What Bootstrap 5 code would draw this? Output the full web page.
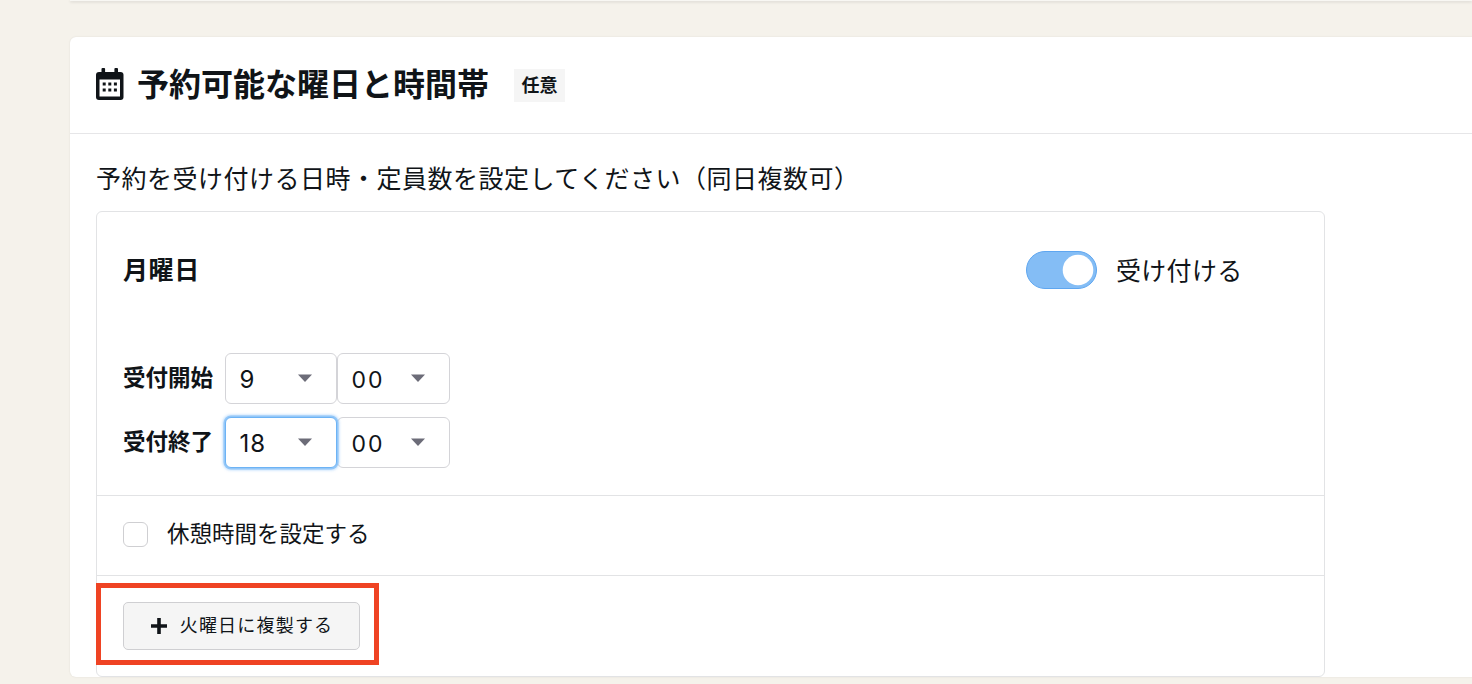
<!DOCTYPE html>
<html lang="ja">
<head>
<meta charset="utf-8">
<title>予約可能な曜日と時間帯</title>
<link href="https://cdn.jsdelivr.net/npm/bootstrap@5.3.0/dist/css/bootstrap.min.css" rel="stylesheet">
<style>
html,body{height:684px;overflow:hidden}
body{background:#f5f2eb;color:#101418;font-family:Inter,"Noto Sans CJK JP",sans-serif;padding:0 0 0 70px}
.topstrip{height:1px;background:#f8f7f3;box-shadow:0 1px 3px rgba(0,0,0,.2);margin-bottom:36px}
.panel{width:1420px;border:0;border-radius:6px 0 0 6px;background:#fff;box-shadow:0 0 2px rgba(0,0,0,.1)}
.panel-head{height:97px;padding:0 0 0 26px;border-bottom:1px solid #e6e6e8;gap:13px}
.head-icon{margin:0 0 3px 0;flex:none}
.panel-title{font-size:32px;font-weight:700;line-height:1;margin:0}
.opt-tag{background:#f5f5f5;font-size:18px;font-weight:700;padding:0 7.5px;height:33px;line-height:33px;margin-left:12px;color:#101418}
.panel-main{padding:29px 0 0 26px}
.lead-text{font-size:25px;letter-spacing:.5px;line-height:32px;margin:0 0 16px}
.day-box{width:1229px;height:466px;border:1px solid #e2e3e5;border-radius:6px;position:relative}
.day-top{padding:0 81.5px 0 26px;height:118px}
.day-name{font-size:25px;font-weight:700;letter-spacing:.6px}
.sw-wrap{gap:19px}
.sw-track{width:71px;height:38px;margin:0 0 3px;padding:0;min-height:0}
.sw-track .form-check-input,.sw-track .form-check-input:checked{width:71px;height:38px;margin:0;float:none;display:block;background-color:#84bdf5;border:1px solid #5ea6f0;opacity:1;box-shadow:none;--bs-form-switch-bg:url("data:image/svg+xml,<svg xmlns='http://www.w3.org/2000/svg' viewBox='-4 -4 8 8'><circle r='3.4' fill='%23fff'/></svg>");background-position:right center}
.sw-text{font-size:25px;line-height:1;letter-spacing:.3px}
.time-area{padding:23px 0 26px 26px;height:165px}
.time-row{height:51px;margin-bottom:13px}
.time-row:last-child{margin-bottom:0}
.time-label{width:102px;font-size:22.5px;font-weight:700;line-height:1;white-space:nowrap}
.time-pick{width:112px;height:51px;font-size:24px;color:#101418;padding:3px 0 0 13.5px;border:1px solid #d4d4d8;border-radius:6px;box-shadow:none;letter-spacing:1px;
background-image:url("data:image/svg+xml,<svg xmlns='http://www.w3.org/2000/svg' width='16' height='9'><path d='M1 .5h14L8 8z' fill='%236c6c78'/></svg>");background-size:16px 9px;background-position:right 23px center}
.time-pick.wide-num{width:113px;font-size:23px;letter-spacing:2px}
.time-pick.on{border-color:#6db3f5;box-shadow:0 0 0 1.5px #93c7f8,0 0 3px 2px rgba(120,185,250,.6);position:relative;z-index:1}
.sect-row{border-top:1px solid #e2e3e5}
.brk-row{height:80px;padding:0 0 2px 26px;gap:19px}
.brk-row .form-check-input{width:25px;height:25px;margin:0;border:1px solid #cfcfd2;border-radius:6px;flex:none}
.brk-text{font-size:22.5px;line-height:1}
.dup-row{height:101px;padding:26px 0 0 26px}
.dup-btn{width:237px;height:48px;background:#f5f5f5;border:1px solid #cfcfd2;border-radius:5px;font-size:18px;letter-spacing:1.2px;color:#101418;padding:0;gap:12px;line-height:1}
.dup-btn:hover{background:#f5f5f5;color:#101418}
.note-frame{position:absolute;left:-1px;top:371px;width:282.5px;height:82px;border:5px solid #ef4323;pointer-events:none}
</style>
</head>
<body>
<div class="topstrip"></div>
<div class="card panel">
  <div class="panel-head d-flex align-items-center">
    <svg class="head-icon" width="28" height="32" viewBox="0 0 28 32" aria-hidden="true"><rect x="0" y="4" width="27.5" height="28" rx="3" fill="#101418"/><rect x="5.5" y="0" width="3.6" height="7" rx="1" fill="#101418"/><rect x="18.4" y="0" width="3.6" height="7" rx="1" fill="#101418"/><rect x="3.5" y="11.5" width="20.5" height="17" fill="#fff"/><g fill="#101418"><rect x="6.7" y="14.5" width="3" height="3"/><rect x="12.3" y="14.5" width="3" height="3"/><rect x="17.9" y="14.5" width="3" height="3"/><rect x="6.7" y="20.5" width="3" height="3"/><rect x="12.3" y="20.5" width="3" height="3"/><rect x="17.9" y="20.5" width="3" height="3"/></g></svg>
    <h2 class="panel-title">予約可能な曜日と時間帯</h2>
    <span class="opt-tag">任意</span>
  </div>
  <div class="panel-main">
    <p class="lead-text">予約を受け付ける日時・定員数を設定してください（同日複数可）</p>
    <div class="day-box">
      <div class="day-top d-flex align-items-center justify-content-between">
        <span class="day-name">月曜日</span>
        <div class="d-flex align-items-center sw-wrap">
          <div class="form-check form-switch sw-track"><input class="form-check-input" type="checkbox" role="switch" checked aria-label="受け付ける"></div>
          <span class="sw-text">受け付ける</span>
        </div>
      </div>
      <div class="time-area">
        <div class="time-row d-flex align-items-center">
          <span class="time-label">受付開始</span>
          <select class="form-select time-pick" aria-label="開始時"><option>9</option></select>
          <select class="form-select time-pick wide-num" aria-label="開始分"><option>00</option></select>
        </div>
        <div class="time-row d-flex align-items-center">
          <span class="time-label">受付終了</span>
          <select class="form-select time-pick on" aria-label="終了時"><option>18</option></select>
          <select class="form-select time-pick wide-num" aria-label="終了分"><option>00</option></select>
        </div>
      </div>
      <div class="sect-row brk-row d-flex align-items-center">
        <input class="form-check-input" type="checkbox" aria-label="休憩時間を設定する">
        <span class="brk-text">休憩時間を設定する</span>
      </div>
      <div class="sect-row dup-row">
        <button type="button" class="btn dup-btn d-flex align-items-center justify-content-center">
          <svg width="18" height="18" viewBox="0 0 18 18" aria-hidden="true"><path d="M9 1v16M1 9h16" stroke="#101418" stroke-width="3.6" fill="none"/></svg>
          <span>火曜日に複製する</span>
        </button>
      </div>
      <div class="note-frame"></div>
    </div>
  </div>
</div>
<script src="https://cdn.jsdelivr.net/npm/bootstrap@5.3.0/dist/js/bootstrap.bundle.min.js"></script>
</body>
</html>
